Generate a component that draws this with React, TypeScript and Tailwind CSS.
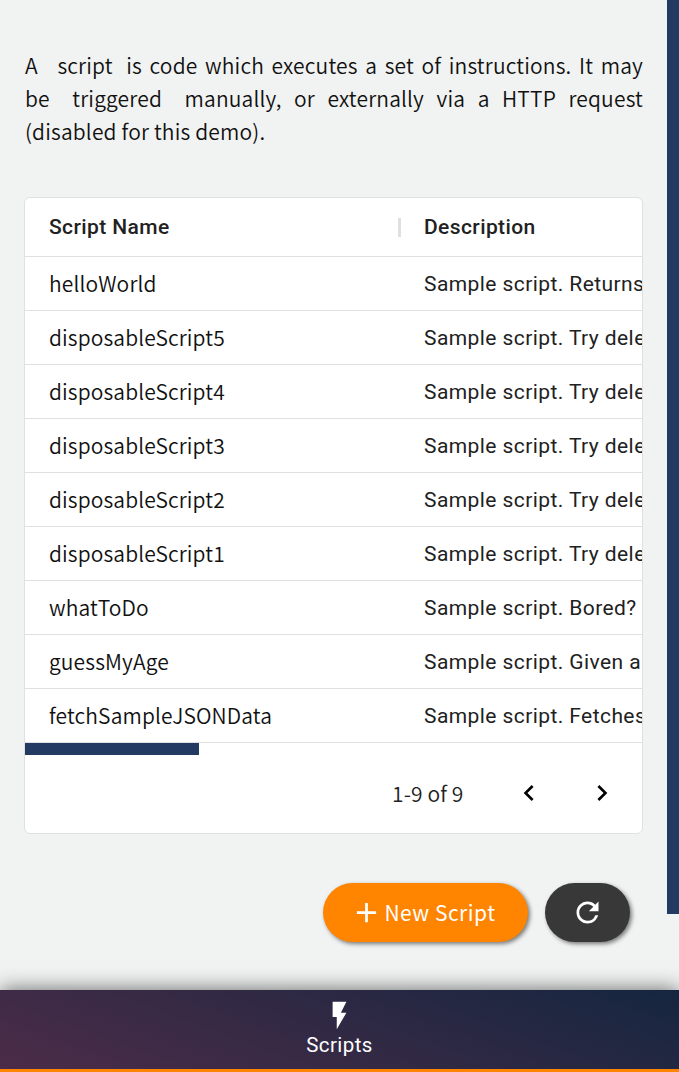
import { MdAdd, MdFlashOn, MdKeyboardArrowLeft, MdKeyboardArrowRight, MdRefresh } from "react-icons/md";

const scripts = [
  { name: "helloWorld", description: "Sample script. Returns a greeting." },
  { name: "disposableScript5", description: "Sample script. Try deleting it." },
  { name: "disposableScript4", description: "Sample script. Try deleting it." },
  { name: "disposableScript3", description: "Sample script. Try deleting it." },
  { name: "disposableScript2", description: "Sample script. Try deleting it." },
  { name: "disposableScript1", description: "Sample script. Try deleting it." },
  { name: "whatToDo", description: "Sample script. Bored? Run this." },
  { name: "guessMyAge", description: "Sample script. Given a name." },
  { name: "fetchSampleJSONData", description: "Sample script. Fetches data." },
];

function Intro() {
  return (
    <p className="h-[99px] pl-px text-justify text-[21px] leading-[33px] tracking-[0.17px] font-[350] text-[#111111]">
      A <span className="ml-[12px] mr-[6px]">script</span> is code which executes a set of instructions. It may{" "}
      <span className="whitespace-nowrap">
        be&nbsp;<span className="mx-[10px]">triggered</span>
      </span>{" "}
      manually, or externally via a HTTP request (disabled&nbsp;for this demo).
    </p>
  );
}

function ScriptTable() {
  return (
    <section className="mt-[49px] h-[637px] overflow-hidden rounded-[6px] border border-[#e0e0e0] bg-white">
      <div className="flex h-[59px] items-center border-b border-[#e0e0e0] font-[Roboto,sans-serif] text-[21px] font-medium tracking-[0.4px] text-[#212121]">
        <div className="flex w-[376px] shrink-0 items-center justify-between pl-6">
          <span className="pt-[2px]">Script Name</span>
          <span className="h-[19px] w-[3px] bg-[#e0e0e0]" />
        </div>
        <div className="pl-[23px] pt-[2px]">Description</div>
      </div>
      {scripts.map((s) => (
        <div key={s.name} className="flex h-[54px] items-center border-b border-[#e0e0e0]">
          <div className="w-[375px] shrink-0 pl-6 text-[21px] font-[350] tracking-[0.13px] text-[#111111]">{s.name}</div>
          <div className="shrink-0 whitespace-nowrap pl-6 pt-[2px] font-[Roboto,sans-serif] text-[21px] font-normal tracking-[0.42px] text-[#212121]">
            {s.description}
          </div>
        </div>
      ))}
      <div className="h-3 w-[174px] bg-[#233a63]" />
      <div className="flex h-[77px] items-center text-[#212121]">
        <span className="ml-[367px] w-[121px] text-[21px] font-[350] tracking-[0.13px] text-[#212121]">1-9 of 9</span>
        <MdKeyboardArrowLeft className="mb-[2px] size-[32px] text-black" />
        <MdKeyboardArrowRight className="mb-[2px] ml-[41px] size-[32px] text-black" />
      </div>
    </section>
  );
}

export default function App() {
  return (
    <div className="flex h-[1072px] w-[679px] flex-col overflow-hidden bg-[#f1f3f2] font-['Noto_Sans_CJK_JP',sans-serif]">
      <div className="flex h-[990px] justify-between">
        <main className="w-[643px] pl-6 pt-[49px]">
          <Intro />
          <ScriptTable />
          <div className="mt-[49px] flex justify-end gap-[17px] pr-[13px]">
            <button className="flex h-[59px] w-[205px] items-center justify-center rounded-full bg-[#ff8400] pr-[5px] text-[21px] tracking-[0.5px] text-white shadow-[2px_2px_4px_rgba(0,0,0,0.5)]">
              <MdAdd className="mr-px size-[33px]" />
              New Script
            </button>
            <button className="flex h-[59px] w-[85px] items-center justify-center rounded-full bg-[#383838] text-white shadow-[2px_2px_4px_rgba(0,0,0,0.5)]">
              <MdRefresh className="size-[33px]" />
            </button>
          </div>
        </main>
        <div className="h-[914px] w-3 bg-[#233a63]" />
      </div>
      <nav className="relative flex h-[82px] flex-col items-center border-b-[3px] border-[#ff8400] bg-[linear-gradient(20deg,#4c2c48,#152640)] pt-[9px] text-white shadow-[0_0_20px_rgba(0,0,0,0.6)]">
        <MdFlashOn className="size-[33px]" />
        <span className="font-[Roboto,sans-serif] text-[20.5px] leading-[26px] tracking-[0.4px]">Scripts</span>
      </nav>
    </div>
  );
}
